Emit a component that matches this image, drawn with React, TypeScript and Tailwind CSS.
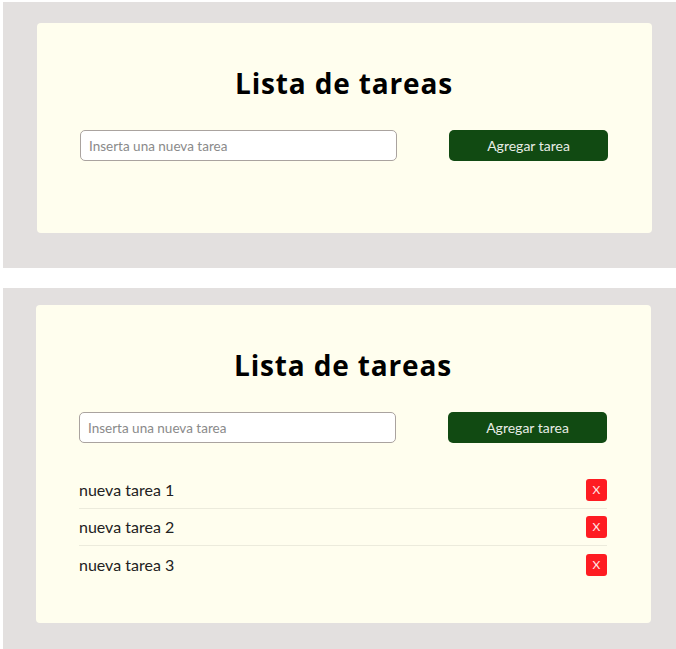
const tareas = ["nueva tarea 1", "nueva tarea 2", "nueva tarea 3"];

function TaskCard({ items, height }: { items: string[]; height: string }) {
  return (
    <div className={`w-[615px] ${height} rounded-[4px] bg-[#fffeee] pl-[43px] pr-[44px] pt-[43px]`}>

      {/* Title */}

      <h1 className="text-center font-['Open_Sans',sans-serif] text-[28px] leading-[34px] font-bold tracking-[0.85px] text-black">
        Lista de tareas
      </h1>

      {/* Form */}

      <div className="mt-[30px] flex h-[31px] justify-between">
        <input
          type="text"
          placeholder="Inserta una nueva tarea"
          className="h-full w-[317px] rounded-[5px] border border-[#aaa39f] bg-white px-[8px] text-[13.5px] text-[#333] placeholder:text-[#8a8a8a] outline-none"
        />
        <button className="h-full w-[159px] rounded-[5px] bg-[#114a12] text-[14px] text-[#e8ede6]">
          Agregar tarea
        </button>
      </div>

      {/* List */}

      {items.length > 0 && (
        <ul className="mt-[29px]">
          {items.map((t, i) => (
            <li
              key={t}
              className={`flex h-[37px] items-center justify-between ${i < items.length - 1 ? "border-b border-[#ecebdc]" : ""}`}
            >
              <span className="text-[16px] text-[#222]">{t}</span>
              <button className="flex h-[22px] w-[21px] items-center justify-center rounded-[3px] bg-[#fe1c22] text-[12px] leading-none text-[#ffe8e8]">
                X
              </button>
            </li>
          ))}
        </ul>
      )}

    </div>
  );
}

export default function App() {
  return (
    <div className="min-h-[649px] bg-white pl-[3px] pt-[2px] font-['Lato',sans-serif]">

      <section className="h-[266px] bg-[#e3e0df] pl-[34px] pt-[21px]">
        <TaskCard items={[]} height="h-[210px]" />
      </section>

      <div className="h-[20px]" />

      <section className="h-[361px] bg-[#e3e0df] pl-[33px] pt-[17px]">
        <TaskCard items={tareas} height="h-[318px]" />
      </section>

    </div>
  );
}
